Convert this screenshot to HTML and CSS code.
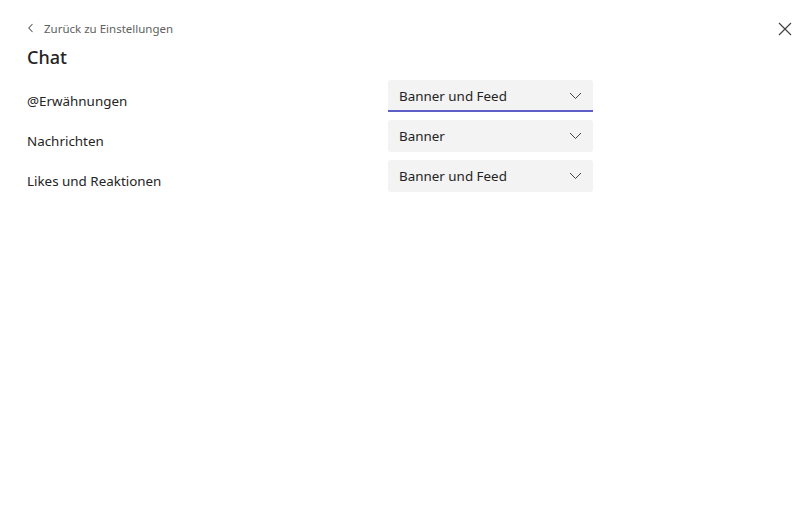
FILE: index.html
```html
<!DOCTYPE html>
<html lang="de">
<head>
    <meta charset="UTF-8">
    <title>Chat-Benachrichtigungen</title>
    <link rel="stylesheet" href="styles.css">
</head>
<body>
    <div class="panel">
        <button class="close-btn" aria-label="Schließen">
            <svg width="14" height="14" viewBox="0 0 14 14"><path d="M1 1 L13 13 M13 1 L1 13" stroke="#424242" stroke-width="1.2" fill="none"/></svg>
        </button>
        <a class="back-link" href="#">
            <svg width="8" height="10" viewBox="0 0 8 10"><path d="M5.5 1 L1.8 5 L5.5 9" stroke="#616161" stroke-width="1.1" fill="none"/></svg>
            <span>Zurück zu Einstellungen</span>
        </a>
        <h1 class="title">Chat</h1>

        <div class="setting-row">
            <div class="setting-label">@Erwähnungen</div>
            <div class="dropdown active">
                <span>Banner und Feed</span>
                <svg class="chev" width="13" height="8" viewBox="0 0 13 8"><path d="M1 1 L6.5 6.5 L12 1" stroke="#424242" stroke-width="1" fill="none"/></svg>
            </div>
        </div>
        <div class="setting-row">
            <div class="setting-label">Nachrichten</div>
            <div class="dropdown">
                <span>Banner</span>
                <svg class="chev" width="13" height="8" viewBox="0 0 13 8"><path d="M1 1 L6.5 6.5 L12 1" stroke="#424242" stroke-width="1" fill="none"/></svg>
            </div>
        </div>
        <div class="setting-row">
            <div class="setting-label">Likes und Reaktionen</div>
            <div class="dropdown">
                <span>Banner und Feed</span>
                <svg class="chev" width="13" height="8" viewBox="0 0 13 8"><path d="M1 1 L6.5 6.5 L12 1" stroke="#424242" stroke-width="1" fill="none"/></svg>
            </div>
        </div>
    </div>
</body>
</html>
```

FILE: styles.css
```css
body { margin: 0; background: #fff; font-family: "Noto Sans", "Open Sans", sans-serif; color: #242424; }
.panel { position: relative; width: 800px; height: 524px; padding: 18px 27px 0; box-sizing: border-box; }
.close-btn { position: absolute; top: 22px; right: 8px; width: 14px; height: 14px; padding: 0; border: none; background: none; display: flex; }
.back-link { display: flex; align-items: center; gap: 9px; height: 20px; color: #616161; font-size: 11.5px; text-decoration: none; }
.title { margin: 5px 0 9px; font-size: 18px; font-weight: 500; line-height: 28px; }
.setting-row { display: flex; align-items: flex-end; margin-bottom: 8px; }
.setting-label { width: 361px; font-size: 13.4px; line-height: 20px; padding-bottom: 1px; }
.dropdown { width: 205px; height: 32px; box-sizing: border-box; padding: 0 11px 0 11px; background: #f3f3f3; border-radius: 3px; display: flex; align-items: center; justify-content: space-between; font-size: 13.4px; }
.dropdown.active { border-bottom: 2px solid #5b5fc7; border-radius: 3px 3px 0 0; padding-top: 2px; }
```
